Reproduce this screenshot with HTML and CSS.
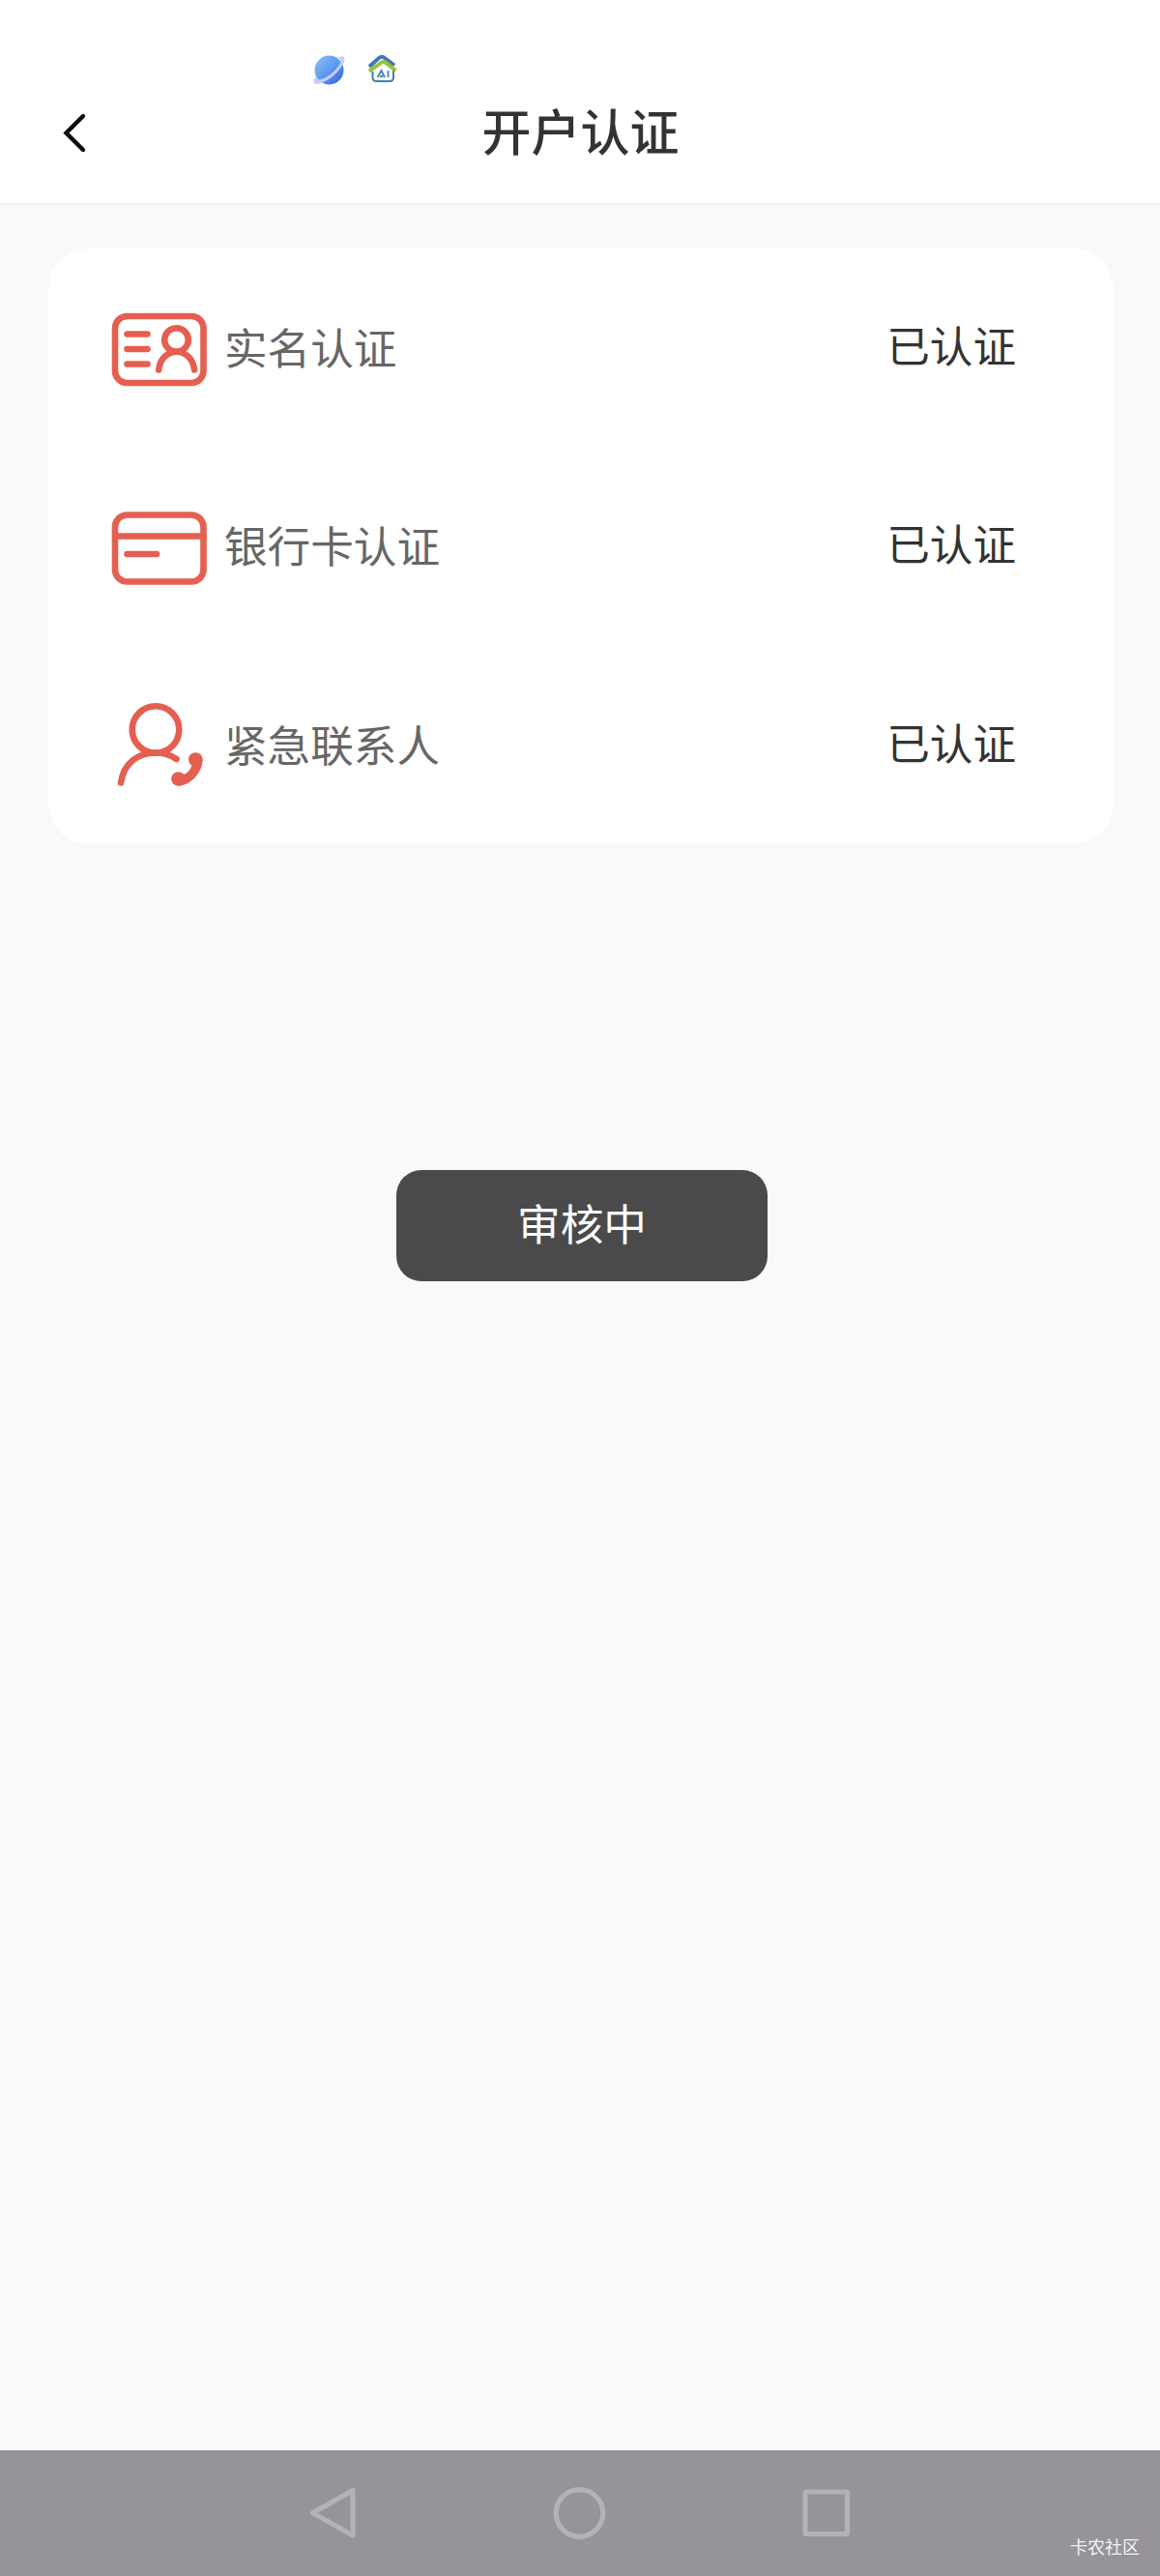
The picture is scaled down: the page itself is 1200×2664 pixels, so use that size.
FILE: index.html
```html
<!DOCTYPE html>
<html lang="zh-CN">
<head>
	<meta charset="utf-8">
	<title>开户认证</title>
	<link rel="stylesheet" href="styles.css">
</head>
<body>
<div class="page">
	<div class="header">
		<div class="status">
			<svg width="34" height="34" viewBox="0 0 34 34">
				<defs>
					<linearGradient id="globe" x1="0" y1="0" x2="1" y2="1">
						<stop offset="0" stop-color="#8cc0fa"/>
						<stop offset="0.5" stop-color="#5d9af0"/>
						<stop offset="1" stop-color="#3560d0"/>
					</linearGradient>
				</defs>
				<circle cx="16.500" cy="16.500" r="15" fill="url(#globe)"/>
				<path d="M25 4C31 0 35 3 31 10C27 18 17 27 8 30C0 33 -1 29 3 22C3 27 6 27 11 25C18 22 25 15 28 9C29.500 6 28 4.500 25 4Z" fill="#c3cff6"/>
			</svg>
			<svg width="30" height="32" viewBox="0 0 30 32">
				<path d="M1 13L11 4Q14 1.500 17 4L27 11.500" fill="none" stroke="#3f79b5" stroke-width="4"/>
				<path d="M1 17.500L9 12L13 9Q15 7 18 9L28.500 17" fill="none" stroke="#9ac23c" stroke-width="4"/>
				<path d="M4.500 18V24Q4.500 28 8.500 28H22Q26 28 26 24V17" fill="none" stroke="#4580aa" stroke-width="2"/>
				<path d="M9.500 24L13.500 17L17 24M12 23H15M20.500 17V24" fill="none" stroke="#4580b8" stroke-width="1.800"/>
			</svg>
		</div>
		<div class="bar">
			<svg class="back" width="30" height="44" viewBox="0 0 30 44">
				<path d="M24 4L6.500 21.500L24 39" fill="none" stroke="#0b0b0b" stroke-width="4.400" stroke-linecap="round"/>
			</svg>
			<div class="title">开户认证</div>
		</div>
	</div>

	<ul class="list">
		<li>
			<svg class="icon" width="100" height="90" viewBox="0 0 100 90">
				<rect x="4" y="10" width="91.500" height="69" rx="12.500"/>
				<path d="M16.500 28.500H37.500M16.500 44H37.500M16.500 59.500H37.500"/>
				<circle cx="67.500" cy="34.500" r="12.300"/>
				<path d="M49.200 65.500C52 40.500 83 40.500 86.200 65.500"/>
			</svg>
			<span class="name">实名认证</span>
			<span class="state">已认证</span>
		</li>
		<li>
			<svg class="icon" width="100" height="90" viewBox="0 0 100 90">
				<rect x="4" y="10.500" width="91.500" height="69" rx="12.500"/>
				<path d="M4 32.500H95.500M16.500 51H47"/>
			</svg>
			<span class="name">银行卡认证</span>
			<span class="state">已认证</span>
		</li>
		<li>
			<svg class="icon" width="100" height="90" viewBox="0 0 100 90">
				<circle cx="46" cy="27.500" r="24.300"/>
				<path d="M10 82.500C13 62 28 51.500 46 51.500C54 51.500 62 54 67.500 58"/>
				<g class="dot">
					<circle cx="87.300" cy="58.500" r="7.300"/>
					<circle cx="69.500" cy="78.500" r="7.300"/>
					<path d="M94.600 58.500C94.500 72 82 85.500 69.500 85.800L74 74.500C79 72.500 82.500 69 83.500 63.500Z"/>
				</g>
			</svg>
			<span class="name">紧急联系人</span>
			<span class="state">已认证</span>
		</li>
	</ul>

	<div class="btn">审核中</div>

	<div class="nav">
		<svg width="60" height="60" viewBox="0 0 60 60">
			<path d="M50 6.500V53L8.500 29.800Z"/>
		</svg>
		<svg width="60" height="60" viewBox="0 0 60 60">
			<circle cx="29.500" cy="30" r="24.300"/>
		</svg>
		<svg width="60" height="60" viewBox="0 0 60 60">
			<rect x="8" y="8" width="43.500" height="43.500" rx="1"/>
		</svg>
		<span class="mark">卡农社区</span>
	</div>
</div>
</body>
</html>
```

FILE: styles.css
```css
*{
	margin: 0px;
	padding: 0px;
	box-sizing: border-box;
}
body{
	background-color: #f9f9f9;
	font-family: "Noto Sans CJK SC", sans-serif;
	color: #333;
}
svg{
	display: block;
	flex: none;
	overflow: visible;
}
.page{
	display: flex;
	flex-direction: column;
	height: 2664px;
}
.header{
	height: 212px;
	padding-top: 56px;
	background-color: #fff;
	border-bottom: 2px solid #f2f2f2;
}
.status{
	display: flex;
	gap: 23px;
	height: 34px;
	padding-left: 324px;
}
.bar{
	display: flex;
	align-items: center;
	height: 96px;
	padding: 0 92px 0 62px;
}
.title{
	flex: 1;
	padding: 0 0 9px 1px;
	font-size: 51px;
	font-weight: 500;
	line-height: 74px;
	text-align: center;
}
.list{
	width: 1102px;
	height: 616px;
	margin: 45px 0 0 50px;
	background-color: #fff;
	border-radius: 42px;
	list-style: none;
}
.list li{
	display: flex;
	align-items: center;
	height: 205.33px;
	padding: 0 101px 0 65px;
	font-size: 44.6px;
}
.icon{
	margin-top: 4px;
	fill: none;
	stroke: #e55f51;
	stroke-width: 6.6;
	stroke-linecap: round;
}
.dot{
	fill: #e55f51;
	stroke: none;
}
.name{
	flex: 1;
	padding: 0 0 4px 17px;
	color: #666;
}
.state{
	padding-bottom: 8px;
}
.btn{
	align-self: center;
	width: 384px;
	height: 115px;
	margin: 337px 0 0 4px;
	background-color: #4a4a4a;
	border-radius: 26px;
	color: #fff;
	font-size: 44.6px;
	line-height: 107px;
	text-align: center;
}
.nav{
	display: flex;
	align-items: center;
	height: 130px;
	margin-top: auto;
	padding: 0 21px 0 315px;
	background-color: #969399;
}
.nav svg{
	margin-right: 195px;
	fill: none;
	stroke: #b3b2b4;
	stroke-width: 5.2;
	stroke-linejoin: round;
}
.nav svg:nth-child(3){
	margin-right: 0;
}
.mark{
	align-self: flex-end;
	margin: 0 0 18px auto;
	color: #f4f4f4;
	font-size: 18px;
	line-height: 26px;
}
```
